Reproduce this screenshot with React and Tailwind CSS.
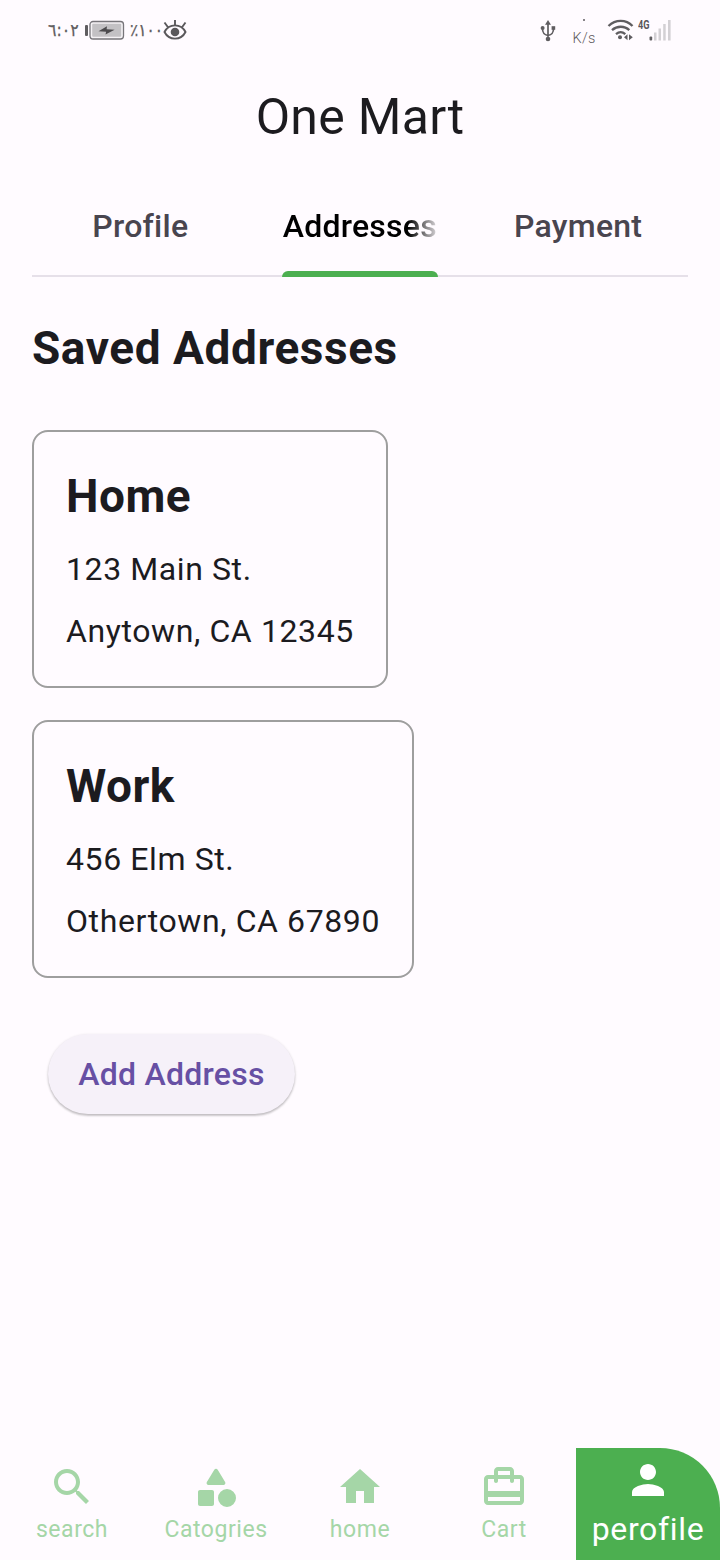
const roboto = "font-['Roboto',sans-serif]";

function StatusBar() {
  return (
    <header className="flex h-[60px] shrink-0 items-center justify-between pl-[48px] pr-[47px] text-[#5f5d60]">
      <div className="flex items-center">
        <span dir="ltr" className="w-[37px] whitespace-nowrap font-['DejaVu_Sans_Condensed','DejaVu_Sans',sans-serif] text-[17.5px] leading-5 [-webkit-text-stroke:0.25px_#5f5d60]">٦:٠٢</span>
        <svg width="40" height="22" viewBox="0 0 40 22" className="block">
          <rect x="0" y="6" width="3" height="11" rx="1" fill="#5f5d60" />
          <rect x="5" y="2.5" width="33.5" height="17.5" rx="3" fill="#f4f1f4" stroke="#77757a" strokeWidth="1.3" />
          <rect x="7.2" y="4.7" width="29" height="13" rx="1" fill="#c3c1c4" />
          <path d="M13.500 12.300 22 7.200l-.4 3 8 .6L20.500 15.400l.6-2.700z" fill="#4c4a4d" />
        </svg>
        <span dir="ltr" className="ml-[5px] w-[33px] whitespace-nowrap font-['DejaVu_Sans_Condensed','DejaVu_Sans',sans-serif] text-[17px] leading-5 tracking-[-0.500px] [-webkit-text-stroke:0.25px_#5f5d60]">٪١٠٠</span>
        <svg width="24" height="22" viewBox="0 0 24 22" fill="none" stroke="#5a585b" strokeWidth="1.9" className="block">
          <path d="M1.500 13C6 4.200 18 4.200 22.500 13 18 21.800 6 21.800 1.500 13z" />
          <circle cx="12" cy="13" r="4.300" fill="#5a585b" stroke="none" />
          <path d="M12 6.500V1M5 8.300 1.500 3.500M19 8.300 22.500 3.500" />
        </svg>
      </div>
      <div className="flex items-center">
        <svg width="16" height="24" viewBox="0 0 16 24" fill="none" stroke="#5f5d60" strokeWidth="1.700" className="mt-[2px] block">
          <path d="M8 4v16M8 16.500C3.500 15.500 2.500 13.500 2.500 9.500M8 16.500c4.500-1 5.500-3 5.500-7" />
          <path d="M8 1l3 4.800H5z" fill="#5f5d60" stroke="none" />
          <circle cx="8" cy="20" r="2.300" fill="#5f5d60" stroke="none" />
          <circle cx="2.600" cy="9" r="2" fill="#5f5d60" stroke="none" />
          <rect x="11.600" y="7.200" width="3.600" height="3.600" fill="#5f5d60" stroke="none" />
        </svg>
        <div className="ml-[16px] flex w-[24px] flex-col items-center pt-[6px]">
          <span className="mb-[9px] size-[2px] rounded-full bg-[#5f5d60]" />
          <span className="whitespace-nowrap font-['Roboto',sans-serif] text-[14.500px] font-light leading-[18px] tracking-[0.200px]">K/s</span>
        </div>
        <svg width="28" height="24" viewBox="0 0 28 24" fill="none" stroke="#5f5d60" strokeWidth="2.300" className="ml-[11px] block">
          <path d="M1.500 8c7-6.800 17.500-6.800 24 0M5 12.200c5-4.600 12.500-4.600 17.300 0M9 16.100c2.800-2.400 6.500-2.400 9.300 0" />
          <circle cx="13" cy="19.300" r="2" fill="#5f5d60" stroke="none" />
          <path d="M20.500 16.200v6l-3.500-3zM22 16.200v6l3.800-3z" fill="#5f5d60" stroke="none" />
        </svg>
        <svg width="35" height="24" viewBox="0 0 35 24" className="ml-[3px] block">
          <text x="0" y="11" fontFamily="Roboto, sans-serif" fontWeight="700" fontSize="12.500" textLength="11.500" lengthAdjust="spacingAndGlyphs" fill="#5a585b">4G</text>
          <rect x="11.500" y="18.500" width="2.700" height="4" rx="1" fill="#5f5d60" />
          <path d="M16 14.500h2.500v8H16zM20.500 10.500H23v12h-2.500zM25.200 6h2.500v16.500h-2.500zM30 2h2.600v20.500H30z" fill="#d3d0d4" />
        </svg>
      </div>
    </header>
  );
}

function Tabs() {
  return (
    <nav className="mx-8 grid h-[99px] shrink-0 grid-cols-3 border-b-2 border-[#e6e0e9] text-[32px] font-medium leading-[40px] tracking-[0.250px] text-[#49454f]">
      <div className="flex justify-center pr-[2px] pt-[28px]">Profile</div>
      <div className="relative mx-[31px] pt-[28px] text-black">
        <div className="overflow-hidden whitespace-nowrap pl-[1px] [mask-image:linear-gradient(to_right,black_126px,transparent_160px)]">Addresses</div>
        <span className="absolute -bottom-[2px] left-0 h-[6px] w-full rounded-t-[6px] bg-[#4caf50]" />
      </div>
      <div className="flex justify-center pr-[1px] pt-[28px]">Payment</div>
    </nav>
  );
}

function AddressCard({ name, street, city, width }) {
  return (
    <section className={`${width} h-[258px] whitespace-nowrap rounded-[16px] border-2 border-[#9e9e9e] px-8 pt-[36px]`}>
      <h3 className="text-[46px] font-bold leading-[56px] tracking-[0.500px]">{name}</h3>
      <p className="mt-[25px] text-[32px] leading-[40px] tracking-[0.600px]">{street}</p>
      <p className="mt-[22px] text-[32px] leading-[40px] tracking-[0.600px]">{city}</p>
    </section>
  );
}

const items = [
  { label: "search", d: "M15.5 14h-.79l-.28-.27C15.41 12.590 16 11.110 16 9.500 16 5.910 13.090 3 9.500 3S3 5.910 3 9.500 5.910 16 9.500 16c1.610 0 3.090-.59 4.230-1.570l.27.28v.79l5 4.990L20.490 19l-4.990-5zm-6 0C7.010 14 5 11.990 5 9.500S7.010 5 9.500 5 14 7.010 14 9.500 11.990 14 9.500 14z" },
  { label: "Catogries", d: "M11.15 3.4 7.43 9.480c-.41.66.07 1.520.85 1.520h7.430c.78 0 1.260-.86.85-1.520L12.850 3.400c-.39-.64-1.310-.64-1.700 0zM17.500 13a4.500 4.500 0 1 0 0 9 4.500 4.500 0 0 0 0-9zM4 21.500h6c.55 0 1-.45 1-1v-6c0-.55-.45-1-1-1H4c-.55 0-1 .45-1 1v6c0 .55.45 1 1 1z" },
  { label: "home", d: "M10 20v-6h4v6h5v-8h3L12 3 2 12h3v8z" },
  { label: "Cart", d: "M20 6h-3V4c0-1.110-.89-2-2-2H9c-1.110 0-2 .89-2 2v2H4c-1.110 0-2 .89-2 2v11c0 1.110.89 2 2 2h16c1.110 0 2-.89 2-2V8c0-1.110-.89-2-2-2zM9 4h6v2H9V4zm11 15H4v-2h16v2zm0-5H4V8h3v1c0 .55.45 1 1 1s1-.45 1-1V8h6v1c0 .55.45 1 1 1s1-.45 1-1V8h3v6z" },
];

function BottomNav() {
  return (
    <footer className="grid h-[112px] shrink-0 grid-cols-5 text-[#a5d6a7]">
      {items.map((item) => (
        <div key={item.label} className="flex flex-col items-center pt-[15px]">
          <svg width="48" height="48" viewBox="0 0 24 24" fill="currentColor" className="block">
            <path d={item.d} />
          </svg>
          <span className="mt-[5px] text-[23px] leading-[28px] tracking-[0.550px]">{item.label}</span>
        </div>
      ))}
      <div className="flex flex-col items-center rounded-tr-[60px] bg-[#4caf50] pt-[8px] text-white">
        <svg width="48" height="48" viewBox="0 0 24 24" fill="currentColor" className="block">
          <path d="M12 12c2.210 0 4-1.790 4-4s-1.790-4-4-4-4 1.790-4 4 1.790 4 4 4zm0 2c-2.670 0-8 1.340-8 4v2h16v-2c0-2.660-5.330-4-8-4z" />
        </svg>
        <span className="mt-[5px] text-[32px] leading-[40px] tracking-[0.650px]">perofile</span>
      </div>
    </footer>
  );
}

export default function App() {
  return (
    <div className={`${roboto} flex h-[1560px] w-[720px] flex-col overflow-hidden bg-[#fffbff] text-[#1c1b1f]`}>
      <StatusBar />
      <h1 className="mt-[27px] h-[91px] shrink-0 text-center text-[50px] leading-[60px] tracking-[0.300px]">One Mart</h1>
      <Tabs />
      <main className="flex flex-1 flex-col items-start px-8 pt-[43px]">
        <h2 className="text-[46px] font-bold leading-[56px] tracking-[0.550px]">Saved Addresses</h2>
        <div className="mt-[54px] flex flex-col gap-8">
          <AddressCard name="Home" street="123 Main St." city="Anytown, CA 12345" width="w-[356px]" />
          <AddressCard name="Work" street="456 Elm St." city="Othertown, CA 67890" width="w-[382px]" />
        </div>
        <button className="ml-4 mt-[56px] h-[80px] w-[247px] whitespace-nowrap rounded-full bg-[#f6f1f9] text-[32px] font-medium tracking-[0.250px] text-[#6750a4] shadow-[0_1px_3px_rgba(0,0,0,0.16),0_2px_2px_rgba(0,0,0,0.14)]">Add Address</button>
      </main>
      <BottomNav />
    </div>
  );
}
